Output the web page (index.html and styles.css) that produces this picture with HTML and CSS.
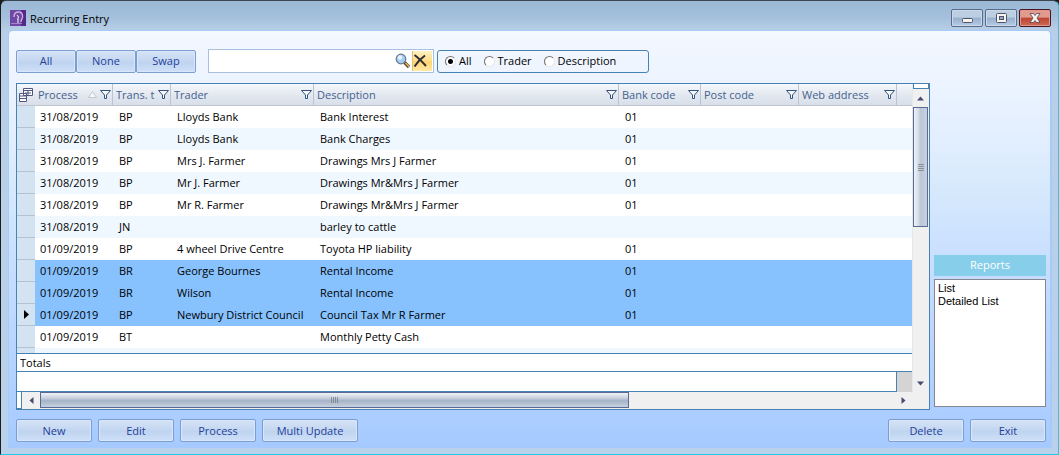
FILE: index.html
```html
<!DOCTYPE html>
<html lang="en">
<head>
<meta charset="utf-8">
<title>Recurring Entry</title>
<link rel="stylesheet" href="styles.css">
</head>
<body>
<svg class="defs" aria-hidden="true">
  <symbol id="funnel" viewBox="0 0 11 9"><path d="M.5 .5h10L6.500 5v3.500h-2V5z" fill="#f4f8fc" stroke="#34507c"/></symbol>
</svg>
<div class="window">
  <header class="titlebar">
    <svg class="app-icon" viewBox="0 0 16 16" aria-hidden="true">
      <rect width="16" height="16" fill="#7048a4"/><rect x="11" width="5" height="16" fill="#55288c"/>
      <path d="M4 7C4 3.500 6 2 8.500 2s4 2 4 4.500-1.500 3-1.500 5.500" fill="none" stroke="#c9aee0" stroke-width="1.500"/>
      <path d="M7 5l1.500 2-1 3M8 9v4" fill="none" stroke="#e6d6f2" stroke-width="1.200"/><path d="M1 13.500h11" stroke="#a585c8"/>
    </svg>
    <h1 class="title">Recurring Entry</h1>
    <button class="win-btn" type="button" aria-label="Minimize"><svg viewBox="0 0 12 10"><rect x="1.500" y="5.500" width="10" height="4" rx="1" fill="#f6f3ee" stroke="#4e5468"/></svg></button>
    <button class="win-btn" type="button" aria-label="Maximize"><svg viewBox="0 0 12 10"><rect x="1.500" y=".5" width="10" height="9" rx="1" fill="#f6f3ee" stroke="#4e5468"/><rect x="4.500" y="3.500" width="4" height="3" fill="#8fa9c8" stroke="#4e5468"/></svg></button>
    <button class="win-btn close" type="button" aria-label="Close"><svg viewBox="0 0 12 10"><path d="M1 .5h3.500L6 2.500 7.500 .5H11L8 5l3 4.500H7.500L6 7.500 4.500 9.500H1L4 5z" fill="#f6f3ee" stroke="#54415a" stroke-width=".8"/></svg></button>
  </header>
  <main class="panel">
    <div class="toolbar">
      <div class="joined">
        <button class="btn" type="button">All</button><button class="btn" type="button">None</button><button class="btn" type="button">Swap</button>
      </div>
      <div class="search">
        <input type="text" aria-label="Search">
        <button class="find" type="button" aria-label="Find"><svg viewBox="0 0 16 16"><path d="M9.500 9.500l4.500 4.500" stroke="#5d4a2c" stroke-width="3.200"/><path d="M10.500 10l3.500 3.500" stroke="#e2b458" stroke-width="1.500"/><circle cx="6" cy="6" r="4.800" fill="#a9cdf2" stroke="#66788f" stroke-width="1.200"/><circle cx="5" cy="4.500" r="2.200" fill="#e6f4ff"/></svg></button>
        <button class="clear" type="button" aria-label="Clear"><svg viewBox="0 0 14 14"><path d="M1.500 1C5 3.500 9 7.500 13 12M12 1.500C8.500 4 4 8.500 1.500 12.500" stroke="#2c2c34" stroke-width="2" fill="none"/></svg></button>
      </div>
      <fieldset class="scope" aria-label="Search in">
        <label><input type="radio" name="scope" checked>All</label>
        <label><input type="radio" name="scope">Trader</label>
        <label><input type="radio" name="scope">Description</label>
      </fieldset>
    </div>
    <div class="content">
      <section class="grid">
        <div class="grid-main">
          <div class="rows">
            <table>
              <colgroup><col class="c-sel"><col class="c-process"><col class="c-trans"><col class="c-trader"><col class="c-desc"><col class="c-bank"><col class="c-post"><col class="c-web"><col></colgroup>
              <thead><tr>
                <th class="chooser"><button type="button" aria-label="Choose columns"><svg viewBox="0 0 14 14"><path d="M4.500 .5h9v7h-9zM4.500 2.500h9M9 2.500v5M6 5h6M.5 5.500h7v8h-7zM.5 8h7M.5 10.500h7" fill="#fff" stroke="#50567e"/></svg></button></th>
                <th><div class="head"><span>Process</span><svg class="sort" viewBox="0 0 9 7"><path d="M.5 6.500L4.500 .5l4 6z" fill="#f7f8fa" stroke="#c3c7cd"/></svg><button type="button" aria-label="Filter Process"><svg><use href="#funnel"/></svg></button></div></th>
                <th><div class="head"><span>Trans. t</span><button type="button" aria-label="Filter Trans. t"><svg><use href="#funnel"/></svg></button></div></th>
                <th><div class="head"><span>Trader</span><button type="button" aria-label="Filter Trader"><svg><use href="#funnel"/></svg></button></div></th>
                <th><div class="head"><span>Description</span><button type="button" aria-label="Filter Description"><svg><use href="#funnel"/></svg></button></div></th>
                <th><div class="head"><span>Bank code</span><button type="button" aria-label="Filter Bank code"><svg><use href="#funnel"/></svg></button></div></th>
                <th><div class="head"><span>Post code</span><button type="button" aria-label="Filter Post code"><svg><use href="#funnel"/></svg></button></div></th>
                <th><div class="head"><span>Web address</span><button type="button" aria-label="Filter Web address"><svg><use href="#funnel"/></svg></button></div></th>
                <th class="rest"></th>
              </tr></thead>
              <tbody>
                <tr><td></td><td>31/08/2019</td><td>BP</td><td>Lloyds Bank</td><td>Bank Interest</td><td>01</td><td></td><td></td><td></td></tr>
                <tr><td></td><td>31/08/2019</td><td>BP</td><td>Lloyds Bank</td><td>Bank Charges</td><td>01</td><td></td><td></td><td></td></tr>
                <tr><td></td><td>31/08/2019</td><td>BP</td><td>Mrs J. Farmer</td><td>Drawings Mrs J Farmer</td><td>01</td><td></td><td></td><td></td></tr>
                <tr><td></td><td>31/08/2019</td><td>BP</td><td>Mr J. Farmer</td><td>Drawings Mr&amp;Mrs J Farmer</td><td>01</td><td></td><td></td><td></td></tr>
                <tr><td></td><td>31/08/2019</td><td>BP</td><td>Mr R. Farmer</td><td>Drawings Mr&amp;Mrs J Farmer</td><td>01</td><td></td><td></td><td></td></tr>
                <tr><td></td><td>31/08/2019</td><td>JN</td><td></td><td>barley to cattle</td><td></td><td></td><td></td><td></td></tr>
                <tr><td></td><td>01/09/2019</td><td>BP</td><td>4 wheel Drive Centre</td><td>Toyota HP liability</td><td>01</td><td></td><td></td><td></td></tr>
                <tr class="selected"><td></td><td>01/09/2019</td><td>BR</td><td>George Bournes</td><td>Rental Income</td><td>01</td><td></td><td></td><td></td></tr>
                <tr class="selected"><td></td><td>01/09/2019</td><td>BR</td><td>Wilson</td><td>Rental Income</td><td>01</td><td></td><td></td><td></td></tr>
                <tr class="selected"><td><svg class="current" viewBox="0 0 5 9"><path d="M0 0l5 4.500L0 9z"/></svg></td><td>01/09/2019</td><td>BP</td><td>Newbury District Council</td><td>Council Tax Mr R Farmer</td><td>01</td><td></td><td></td><td></td></tr>
                <tr><td></td><td>01/09/2019</td><td>BT</td><td></td><td>Monthly Petty Cash</td><td></td><td></td><td></td><td></td></tr>
                <tr><td></td><td></td><td></td><td></td><td></td><td></td><td></td><td></td><td></td></tr>
              </tbody>
            </table>
          </div>
          <div class="totals">Totals</div>
          <div class="totals-values"></div>
        </div>
        <div class="vscroll">
          <span class="splitter"></span>
          <span class="arrow"><svg viewBox="0 0 7 4"><path d="M0 4l3.500-4L7 4z"/></svg></span>
          <span class="track"><span class="thumb"></span></span>
          <span class="arrow"><svg viewBox="0 0 7 4"><path d="M0 0l3.500 4L7 0z"/></svg></span>
        </div>
        <div class="hscroll">
          <span class="stub"></span>
          <span class="arrow"><svg viewBox="0 0 4 7"><path d="M4 0L0 3.500 4 7z"/></svg></span>
          <span class="track"><span class="thumb"></span></span>
          <span class="arrow"><svg viewBox="0 0 4 7"><path d="M0 0l4 3.500L0 7z"/></svg></span>
        </div>
      </section>
      <aside class="reports">
        <h2>Reports</h2>
        <ul><li>List</li><li>Detailed List</li></ul>
      </aside>
    </div>
    <footer class="actions">
      <button class="btn" type="button">New</button>
      <button class="btn" type="button">Edit</button>
      <button class="btn" type="button">Process</button>
      <button class="btn wide" type="button">Multi Update</button>
      <span class="spacer"></span>
      <button class="btn" type="button">Delete</button>
      <button class="btn" type="button">Exit</button>
    </footer>
  </main>
</div>
</body>
</html>
```
FILE: styles.css
```css
* { box-sizing: border-box; }
body {
  margin: 0;
  background: #1c1c1c;
  font: 11px/14px "Open Sans", "Noto Sans", sans-serif;
  color: #000;
}
button, input { font: inherit; color: inherit; }
button { padding: 0; border: 0; background: none; }
.defs { position: absolute; width: 0; height: 0; }

.window {
  display: flex;
  flex-direction: column;
  min-height: 100vh;
  padding: 0 6px 6px 7px;
  border: 1px solid #25c9e8;
  border-top-color: #3a4650;
  border-left-color: #1c1c1c;
  border-radius: 6px 6px 0 0;
  background: linear-gradient(#9bb8d5, #a3bfdb 15px, #b9cfe8 30px, #b9d1ea);
}

.titlebar {
  display: flex;
  gap: 2px;
  height: 29px;
  padding: 8px 1px 0 2px;
}
.app-icon { width: 16px; height: 16px; margin-top: 1px; }
.title { flex: 1; margin: 3px 0 0 2px; font-size: 11px; line-height: 14px; font-weight: 400; }
.win-btn {
  display: grid;
  place-items: center;
  width: 32px;
  height: 18px;
  border: 1px solid #5b6c88;
  border-radius: 2px;
  box-shadow: inset 0 0 0 1px #c9d9ea;
  background: linear-gradient(#bccee2 45%, #97b0cd 50%, #b4cce4);
}
.win-btn svg { width: 12px; height: 10px; }
.win-btn.close {
  border-color: #4a1520;
  box-shadow: inset 0 0 0 1px #dd9a92;
  background: linear-gradient(#e29a8c 45%, #bd4434 50%, #cf6a50);
}

.panel {
  flex: 1;
  display: flex;
  flex-direction: column;
  padding: 18px 4px 5px 7px;
  border: 1px solid #a6cbfa;
  border-right-width: 2px;
  border-radius: 5px 5px 0 0;
  background: linear-gradient(#f4f8ff, #e3efff 25%, #d6e9fc 38%, #c6ddff 58%, #a6caff);
}

.btn {
  width: 76px;
  height: 23px;
  border: 1px solid #7c9fd0;
  border-radius: 2px;
  box-shadow: inset 0 0 0 1px #d7e6fa;
  background: linear-gradient(#d5e3f6, #c3d6f0 50%, #bfd4f0 55%, #cfe0f8);
  color: #1f3f9a;
}
.btn.wide { width: 96px; }

.toolbar { display: flex; align-items: center; height: 24px; margin-bottom: 10px; }
.joined { display: flex; }
.joined .btn { width: 60px; }
.search {
  display: flex;
  width: 226px;
  height: 24px;
  margin: 0 3px 0 12px;
  padding: 1px;
  border: 1px solid #a9c0de;
  background: #fff;
}
.search input { flex: 1; min-width: 0; border: 0; outline: 0; background: none; }
.find { width: 17px; }
.find svg { display: block; width: 16px; height: 16px; }
.clear { width: 20px; border-left: 1px solid #d9c27a; background: linear-gradient(#fff0c4, #ffdf90 45%, #ffd36e 55%, #ffe9a8); }
.clear svg { display: block; width: 14px; height: 14px; }
.scope {
  display: flex;
  gap: 12px;
  width: 212px;
  height: 23px;
  margin: 0;
  padding: 3px 7px;
  border: 1px solid #4682b4;
  border-radius: 3px;
}
.scope label { display: flex; align-items: center; gap: 3px; }
.scope input {
  appearance: none;
  width: 11px;
  height: 11px;
  margin: 0;
  border: 1px solid;
  border-color: #707070 #e8e8e8 #e8e8e8 #707070;
  border-radius: 50%;
  background: #fff;
}
.scope input:checked { background: radial-gradient(circle, #000 2px, #fff 3px); }

.content { flex: 1; display: flex; gap: 4px; min-height: 0; }
.grid {
  flex: 1;
  min-width: 0;
  display: grid;
  grid-template: minmax(0, 1fr) 17px / minmax(0, 1fr) 17px;
  border: 1px solid #4682b4;
  background: #f0f0f0;
}
.grid-main { display: flex; flex-direction: column; min-width: 0; background: #fff; }
.rows { flex: 1 1 0; min-height: 0; overflow: hidden; }
table { width: 100%; table-layout: fixed; border-collapse: separate; border-spacing: 0; }
.c-sel { width: 18px; }
.c-process { width: 78px; }
.c-trans { width: 58px; }
.c-trader { width: 143px; }
.c-desc { width: 305px; }
.c-bank { width: 82px; }
.c-post, .c-web { width: 98px; }
th {
  height: 22px;
  padding: 0 1px 0 3px;
  border-right: 1px solid #b8c4d6;
  border-bottom: 1px solid #bfc6d2;
  background: linear-gradient(#f4f8fb, #e4e9f0 50%, #d8dfe9);
  color: #44618f;
  font-weight: 400;
  text-align: left;
}
th.chooser { padding: 0 1px 0 2px; border-right: 0; }
th.chooser button { display: block; }
th.chooser svg { display: block; width: 14px; height: 14px; }
th.rest { border-right: 0; }
.head { display: flex; align-items: center; gap: 3px; }
.head span { flex: 1; overflow: hidden; white-space: nowrap; }
.head button svg { display: block; width: 11px; height: 9px; }
.head .sort { width: 9px; height: 7px; }
td { height: 22px; padding: 0 5px; white-space: nowrap; }
td:nth-child(3), td:nth-child(4), td:nth-child(5), td:nth-child(6) { padding-left: 6px; }
tbody tr:nth-child(even) { background: #f0f8ff; }
tbody tr.selected { background: #87c2ff; }
td:first-child { padding: 0 0 0 7px; border-bottom: 1px solid #b4c2d4; background: #d3e3f2; }
.current { display: block; width: 5px; height: 9px; }

.totals { height: 19px; padding: 2px 3px; border: solid #4682b4; border-width: 1px 0 1px 0; }
.totals-values { height: 20px; border-right: 1px solid #4682b4; border-bottom: 1px solid #4682b4; box-shadow: 15px 0 #d4d4d4; margin-right: 15px; }

.vscroll { display: flex; flex-direction: column; border-left: 1px solid #e2e8ee; }
.splitter { height: 5px; border: 1px solid #4682b4; border-top-width: 0; background: #fff; }
.arrow { display: grid; place-items: center; width: 18px; height: 17px; fill: #474a72; }
.vscroll .arrow { width: 15px; height: 18px; }
.arrow svg { width: 7px; height: 5px; }
.hscroll .arrow svg { width: 5px; height: 7px; }
.track { flex: 1; display: flex; }
.thumb { border: 1px solid #596b94; }
.vscroll .thumb {
  width: 15px;
  height: 45%;
  background: repeating-linear-gradient(#8a8f98 0 1px, transparent 1px 2px) center / 6px 7px no-repeat, linear-gradient(90deg, #f0f3f7, #d2dbe6 35%, #bac7d8 50%, #c6d1e0);
}
.hscroll { grid-column: 1 / 3; display: flex; padding-right: 17px; }
.stub { width: 5px; border: solid #4682b4; border-width: 0 1px 1px 0; background: #fff; }
.hscroll .thumb {
  width: 69%;
  height: 16px;
  background: repeating-linear-gradient(90deg, #858a92 0 1px, transparent 1px 2px) center / 7px 6px no-repeat, linear-gradient(#f0f3f7, #c9d2df 35%, #a5b3c7 55%, #c6d1e0);
}

.reports { display: flex; flex-direction: column; justify-content: flex-end; width: 112px; padding-bottom: 3px; }
.reports h2 { margin: 0 0 3px; padding: 3px 0 4px; background: #87ceeb; color: #fff; font-size: 11px; line-height: 14px; font-weight: 400; text-align: center; }
.reports ul { height: 128px; margin: 0; padding: 2px 3px; border: 1px solid #828790; background: #fff; list-style: none; font-family: "Liberation Sans", Arial, sans-serif; line-height: 13px; }

.actions { display: flex; gap: 6px; margin-top: 9px; }
.spacer { flex: 1; }
```
